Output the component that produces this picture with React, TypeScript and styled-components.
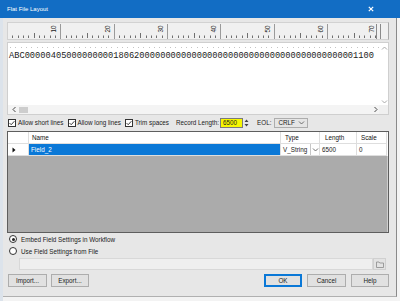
import React from "react";
import styled, { createGlobalStyle } from "styled-components";

const GlobalStyle = createGlobalStyle`
  html, body {
    margin: 0;
    padding: 0;
    background: #f3f3f3;
  }
  body {
    font-family: "Liberation Sans", Arial, sans-serif;
    font-size: 6.3px;
    color: #1b1b1b;
  }
`;

// the sample record shown in the preview pane (70 chars)
const RECORD = "ABC00000405" + "0".repeat(9) + "18062" + "0".repeat(41) + "1100";
const CHAR_W = 16 / 3;

const columns = [
  { key: "row", width: 21, title: "" },
  { key: "name", width: 252, title: "Name", pad: 3 },
  { key: "type", width: 39, title: "Type", pad: 4 },
  { key: "length", width: 37, title: "Length", pad: 5 },
  { key: "scale", width: 30, title: "Scale", pad: 4 },
];

const RulerDrawing: React.FC = () => {
  const marks: React.ReactNode[] = [];
  for (let k = 1; k < 70; k++) {
    const x = Math.round(-1 + k * CHAR_W) + 0.5;
    if (k % 10 === 0) {
      marks.push(
        <line key={"d" + k} x1={x} x2={x} y1={1} y2={17} stroke="#9a9a9a" />
      );
      marks.push(
        <text
          key={"t" + k}
          transform={`translate(${x - 4.5},9.5) rotate(-90)`}
          fontSize={6.3}
          fill="#222"
          fontFamily="Liberation Sans, Arial, sans-serif"
        >
          {k}
        </text>
      );
      continue;
    }
    const tall = k % 5 === 0;
    marks.push(
      <line key={k} x1={x} x2={x} y1={tall ? 10 : 12.5} y2={15} stroke="#6f6f6f" />
    );
  }
  return (
    <svg width={380} height={16} style={{ display: "block" }}>
      {marks}
      <text transform="translate(366,9.5) rotate(-90)" fontSize={6.3} fill="#222" fontFamily="Liberation Sans, Arial, sans-serif">
        70
      </text>
      <line x1={368.5} x2={368.5} y1={1} y2={17} stroke="#8a8a8a" />
      <line x1={372.5} x2={372.5} y1={1} y2={17} stroke="#8a8a8a" />
    </svg>
  );
};

const Chevron: React.FC<{ dir: "up" | "down" | "left" | "right"; color?: string }> = ({ dir, color = "#606060" }) => {
  const d = {
    up: "M1 4.5 L3.5 2 L6 4.5",
    down: "M1 2.5 L3.5 5 L6 2.5",
    left: "M4.5 1 L2 3.5 L4.5 6",
    right: "M2.5 1 L5 3.5 L2.5 6",
  }[dir];
  return (
    <svg width={7} height={7} viewBox="0 0 7 7">
      <path d={d} fill="none" stroke={color} strokeWidth={0.9} />
    </svg>
  );
};

const Check = () => (
  <svg width={8} height={8} viewBox="0 0 8 8">
    <path d="M1.6 4.1 L3.2 5.7 L6.4 2.2" fill="none" stroke="#222" strokeWidth={0.9} />
  </svg>
);

const Folder = () => (
  <svg width={8} height={7} viewBox="0 0 8 7">
    <path d="M0.5 1 H3 L3.8 2 H7.5 V6.5 H0.5 Z" fill="none" stroke="#8a8a8a" strokeWidth={0.8} />
  </svg>
);

const App: React.FC = () => {
  return (
    <>
      <GlobalStyle />
      <Window>
        <TitleBar>
          <span>Flat File Layout</span>
          <svg width={6} height={6} viewBox="0 0 6 6">
            <path d="M0.8 0.8 L5.2 5.2 M5.2 0.8 L0.8 5.2" stroke="#fff" strokeWidth={1.2} />
          </svg>
        </TitleBar>
        <Body>
          <LeftEdge />
          <Dialog>
            <Ruler>
              <RulerDrawing />
            </Ruler>

            <TextPane>
              <PaneMain>
                <PaneContent>
                  <Dots />
                  <RecordText>{RECORD}</RecordText>
                </PaneContent>
                <VScroll>
                  <Chevron dir="up" color="#a0a0a0" />
                  <Chevron dir="down" color="#a0a0a0" />
                </VScroll>
              </PaneMain>
              <HScroll>
                <Chevron dir="left" color="#333" />
                <Thumb />
                <Spacer />
                <Chevron dir="right" color="#333" />
                <Corner />
              </HScroll>
            </TextPane>

            <OptionsRow>
              <Option>
                <CheckBox>
                  <Check />
                </CheckBox>
                Allow short lines
              </Option>
              <Option>
                <CheckBox>
                  <Check />
                </CheckBox>
                Allow long lines
              </Option>
              <Option>
                <CheckBox>
                  <Check />
                </CheckBox>
                Trim spaces
              </Option>
              <FieldLabel>Record Length:</FieldLabel>
              <LengthInput>6500</LengthInput>
              <Spinner>
                <svg width={5} height={10} viewBox="0 0 5 10">
                  <path d="M0.5 4 L2.5 1.5 L4.5 4 Z M0.5 6 L2.5 8.5 L4.5 6 Z" fill="#444" />
                </svg>
              </Spinner>
              <FieldLabel $ml={4}>EOL:</FieldLabel>
              <Select>
                CRLF
                <Chevron dir="down" />
              </Select>
            </OptionsRow>

            <GridFrame>
              <GridRow $header>
                {columns.map((c) => (
                  <Cell key={c.key} $pad={c.pad ?? 0}>
                    {c.title}
                  </Cell>
                ))}
              </GridRow>
              <GridRow>
                <Cell $pad={4}>
                  <svg width={4} height={6} viewBox="0 0 4 6">
                    <path d="M0.5 0.5 L3.5 3 L0.5 5.5 Z" fill="#111" />
                  </svg>
                </Cell>
                <Cell $pad={2} $selected>
                  Field_2
                </Cell>
                <Cell $pad={1}>
                  <TypeText>V_String</TypeText>
                  <ComboButton>
                    <Chevron dir="down" />
                  </ComboButton>
                </Cell>
                <Cell $pad={2}>6500</Cell>
                <Cell $pad={2}>0</Cell>
              </GridRow>
            </GridFrame>

            <RadioRow>
              <Radio $checked />
              Embed Field Settings in Workflow
            </RadioRow>
            <RadioRow>
              <Radio />
              Use Field Settings from File
            </RadioRow>

            <FileRow>
              <FileInput />
              <FolderButton>
                <Folder />
              </FolderButton>
            </FileRow>

            <ButtonRow>
              <Button $w={39}>Import...</Button>
              <Button $w={38}>Export...</Button>
              <Spacer />
              <Button $w={38} $default>
                OK
              </Button>
              <Button $w={39}>Cancel</Button>
              <Button $w={38}>Help</Button>
            </ButtonRow>
          </Dialog>
          <RightEdge />
        </Body>
      </Window>
    </>
  );
};

const Window = styled.div`
  width: 400px;
  height: 301px;
  display: flex;
  flex-direction: column;
  overflow: hidden;
`;

const TitleBar = styled.div`
  height: 18px;
  flex: none;
  box-sizing: border-box;
  background: #126dc4;
  color: #fff;
  font-size: 6px;
  display: flex;
  align-items: center;
  justify-content: space-between;
  padding: 0 26px 0 7px;
`;

const Body = styled.div`
  flex: 1;
  display: flex;
  align-items: flex-start;
`;

const LeftEdge = styled.div`
  width: 3px;
  height: 100%;
  background: #dce3eb;
`;

const RightEdge = styled.div`
  flex: 1;
  height: 100%;
  background: #f4f4f4;
`;

const Dialog = styled.div`
  width: 394px;
  height: 279px;
  box-sizing: border-box;
  background: #e7e7e7;
  border-right: 1px solid #8a8a8a;
  border-bottom: 1px solid #b0b0b0;
  padding: 4px 7px 0 4px;
  display: flex;
  flex-direction: column;
`;

const Ruler = styled.div`
  height: 18px;
  box-sizing: border-box;
  background: #f0f0f0;
  border: 1px solid #d2d2d2;
  border-right-color: #a8a8a8;
  overflow: hidden;
`;

const TextPane = styled.div`
  margin-top: 2px;
  height: 73px;
  box-sizing: border-box;
  border: 1px solid #cfcfcf;
  background: #fff;
  display: flex;
  flex-direction: column;
`;

const PaneMain = styled.div`
  flex: 1;
  display: flex;
  min-height: 0;
`;

const PaneContent = styled.div`
  flex: 1;
  overflow: hidden;
  padding: 4px 0 0 1px;
`;

const Dots = styled.div`
  height: 1px;
  margin-left: 1px;
  background: repeating-linear-gradient(to right, #c4c4c4 0 1px, transparent 1px 5.333px);
`;

const RecordText = styled.div`
  margin-top: 3px;
  font-family: "Liberation Mono", "Courier New", monospace;
  font-size: 8.7px;
  line-height: 10px;
  white-space: pre;
  color: #222;
`;

const VScroll = styled.div`
  width: 8px;
  display: flex;
  flex-direction: column;
  justify-content: space-between;
  align-items: center;
  padding: 2px 0 0;
`;

const HScroll = styled.div`
  height: 9px;
  display: flex;
  align-items: center;
  padding-left: 3px;
  background: #f4f4f4;
`;

const Thumb = styled.div`
  width: 9px;
  height: 6px;
  margin-left: 1px;
  background: #cdcdcd;
`;

const Spacer = styled.div`
  flex: 1;
`;

const Corner = styled.div`
  width: 9px;
  height: 9px;
  background: #f0f0f0;
`;

const OptionsRow = styled.div`
  margin-top: 1px;
  height: 13px;
  display: flex;
  align-items: center;
  padding-left: 1px;
  gap: 4px;
  white-space: nowrap;
`;

const Option = styled.label`
  display: flex;
  align-items: center;
  gap: 2px;
`;

const CheckBox = styled.span`
  width: 8px;
  height: 8px;
  box-sizing: border-box;
  border: 1px solid #333;
  background: #fff;
  display: flex;
  align-items: center;
  justify-content: center;
  & svg {
    flex: none;
  }
`;

const FieldLabel = styled.span<{ $ml?: number }>`
  margin-left: ${(p) => p.$ml ?? 3}px;
`;

const LengthInput = styled.div`
  width: 23px;
  height: 10px;
  box-sizing: border-box;
  border: 1px solid #7a7a7a;
  background: #f7f700;
  padding-left: 2px;
  line-height: 8px;
  margin-left: -3px;
`;

const Spinner = styled.div`
  width: 5px;
  height: 10px;
  margin-left: -3px;
  display: flex;
`;

const Select = styled.div`
  width: 34px;
  height: 10px;
  box-sizing: border-box;
  border: 1px solid #adadad;
  background: #e5e5e5;
  display: flex;
  align-items: center;
  justify-content: space-between;
  padding: 0 2px 0 3px;
  margin-left: -1px;
`;

const GridFrame = styled.div`
  margin-top: 2px;
  height: 102px;
  box-sizing: border-box;
  border: 1px solid #5e5e5e;
  box-shadow: inset -1px 0 0 #cfcfcf;
  background: #ababab;
`;

const GridRow = styled.div<{ $header?: boolean }>`
  display: grid;
  grid-template-columns: ${columns.map((c) => c.width + "px").join(" ")};
  height: 12px;
  background: #fff;
  color: ${(p) => (p.$header ? "#111" : "#222")};
`;

const Cell = styled.div<{ $pad: number; $selected?: boolean }>`
  display: flex;
  align-items: center;
  box-sizing: border-box;
  padding-left: ${(p) => p.$pad}px;
  border-right: 1px solid #dedede;
  border-bottom: 1px solid #dedede;
  background: ${(p) => (p.$selected ? "#0a78d7" : "transparent")};
  color: ${(p) => (p.$selected ? "#fff" : "inherit")};
  overflow: hidden;
  white-space: nowrap;
`;

const TypeText = styled.span`
  flex: 1;
  padding-left: 1px;
`;

const ComboButton = styled.span`
  width: 8px;
  height: 11px;
  border-left: 1px solid #c6c6c6;
  display: flex;
  align-items: center;
  justify-content: center;
`;

const RadioRow = styled.div`
  height: 12px;
  display: flex;
  align-items: center;
  gap: 4px;
  padding-left: 2px;
  &:first-of-type {
    margin-top: 5px;
  }
`;

const Radio = styled.span<{ $checked?: boolean }>`
  width: 8px;
  height: 8px;
  box-sizing: border-box;
  border-radius: 50%;
  border: 1px solid #333;
  background: #fff;
  position: relative;
  &::after {
    content: "";
    display: ${(p) => (p.$checked ? "block" : "none")};
    position: absolute;
    left: 1.5px;
    top: 1.5px;
    width: 3px;
    height: 3px;
    border-radius: 50%;
    background: #222;
  }
`;

const FileRow = styled.div`
  margin: 1px 3px 0 12px;
  height: 12px;
  display: flex;
`;

const FileInput = styled.div`
  flex: 1;
  box-sizing: border-box;
  border: 1px solid #d8d8d8;
  background: #efefef;
`;

const FolderButton = styled.div`
  width: 13px;
  box-sizing: border-box;
  border: 1px solid #d0d0d0;
  background: #e3e3e3;
  display: flex;
  align-items: center;
  justify-content: center;
`;

const ButtonRow = styled.div`
  margin-top: 4px;
  height: 13px;
  display: flex;
  gap: 4px;
  padding-left: 1px;
`;

const Button = styled.div<{ $w: number; $default?: boolean }>`
  width: ${(p) => p.$w}px;
  box-sizing: border-box;
  border: 1px solid ${(p) => (p.$default ? "#0a78d7" : "#adadad")};
  box-shadow: ${(p) => (p.$default ? "inset 0 0 0 1px #0a78d7" : "none")};
  background: #e1e1e1;
  display: flex;
  align-items: center;
  justify-content: center;
  &:nth-last-child(-n + 2) {
    margin-left: 1px;
  }
`;

export default App;
